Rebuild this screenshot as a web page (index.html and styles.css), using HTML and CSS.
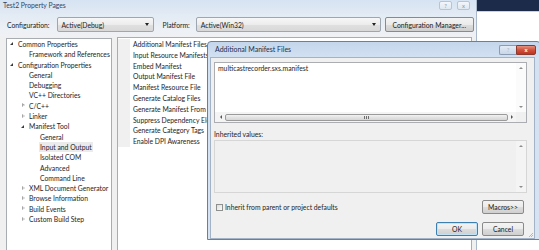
FILE: index.html
```html
<!DOCTYPE html>
<html lang="en">
<head>
    <meta charset="UTF-8">
    <meta name="viewport" content="width=device-width, initial-scale=1.0">
    <title>Test2 Property Pages</title>
    <link rel="stylesheet" href="styles.css">
</head>
<body>
    <div class="screen">
        <div class="window">
            <div class="titlebar">
                <span class="title">Test2 Property Pages</span>
                <div class="caption">
                    <span class="cap-btn">?</span>
                    <span class="cap-btn">x</span>
                </div>
            </div>

            <div class="toolbar">
                <span class="lbl">Configuration:</span>
                <div class="combo combo-config"><span>Active(Debug)</span><span class="arrow"></span></div>
                <span class="lbl lbl-platform">Platform:</span>
                <div class="combo combo-platform"><span>Active(Win32)</span><span class="arrow"></span></div>
                <button class="btn btn-manager">Configuration Manager...</button>
            </div>

            <div class="panels">
                <ul class="tree">
                    <li class="lvl0"><span class="tw open"></span>Common Properties</li>
                    <li class="lvl1"><span class="tw"></span>Framework and References</li>
                    <li class="lvl0"><span class="tw open"></span>Configuration Properties</li>
                    <li class="lvl1"><span class="tw"></span>General</li>
                    <li class="lvl1"><span class="tw"></span>Debugging</li>
                    <li class="lvl1"><span class="tw"></span>VC++ Directories</li>
                    <li class="lvl1"><span class="tw closed"></span>C/C++</li>
                    <li class="lvl1"><span class="tw closed"></span>Linker</li>
                    <li class="lvl1"><span class="tw open"></span>Manifest Tool</li>
                    <li class="lvl2"><span class="tw"></span>General</li>
                    <li class="lvl2"><span class="tw"></span><span class="selected">Input and Output</span></li>
                    <li class="lvl2"><span class="tw"></span>Isolated COM</li>
                    <li class="lvl2"><span class="tw"></span>Advanced</li>
                    <li class="lvl2"><span class="tw"></span>Command Line</li>
                    <li class="lvl1"><span class="tw closed"></span>XML Document Generator</li>
                    <li class="lvl1"><span class="tw closed"></span>Browse Information</li>
                    <li class="lvl1"><span class="tw closed"></span>Build Events</li>
                    <li class="lvl1"><span class="tw closed"></span>Custom Build Step</li>
                </ul>

                <div class="grid">
                    <div class="prop">Additional Manifest Files</div>
                    <div class="prop">Input Resource Manifests</div>
                    <div class="prop">Embed Manifest</div>
                    <div class="prop">Output Manifest File</div>
                    <div class="prop">Manifest Resource File</div>
                    <div class="prop">Generate Catalog Files</div>
                    <div class="prop">Generate Manifest From ManagedAssembly</div>
                    <div class="prop">Suppress Dependency Element</div>
                    <div class="prop">Generate Category Tags</div>
                    <div class="prop">Enable DPI Awareness</div>
                </div>
            </div>
        </div>

        <div class="behind">
            <div class="behind-bar"></div>
        </div>
    </div>

    <!-- modal editor that sits over the property pages -->
    <div class="dialog">
        <div class="dlg-titlebar">
            <span class="dlg-title">Additional Manifest Files</span>
            <div class="dlg-caption">
                <span class="dlg-help">?</span>
                <span class="dlg-close">x</span>
            </div>
        </div>
        <div class="dlg-client">
            <div class="editbox">
                <div class="edit-text">multicastrecorder.sxs.manifest</div>
                <div class="vscroll">
                    <span class="tri up"></span>
                    <span class="tri down"></span>
                </div>
                <div class="hscroll">
                    <span class="tri left"></span>
                    <div class="thumb"><span class="grip"></span></div>
                    <span class="tri right"></span>
                </div>
                <div class="corner"></div>
            </div>

            <div class="inherited-label">Inherited values:</div>
            <div class="inherited">
                <div class="inherited-text"></div>
                <div class="vscroll">
                    <span class="tri up"></span>
                    <span class="tri down"></span>
                </div>
            </div>

            <div class="options">
                <label class="check"><span class="box"></span>Inherit from parent or project defaults</label>
                <button class="btn">Macros&gt;&gt;</button>
            </div>
            <div class="actions">
                <button class="btn btn-default">OK</button>
                <button class="btn">Cancel</button>
            </div>
            <span class="grip-corner"></span>
        </div>
    </div>
</body>
</html>
```

FILE: styles.css
```css
body {
    margin: 0;
    width: 539px;
    height: 250px;
    overflow: hidden;
    position: relative;
    font-family: Lato, "Liberation Sans", sans-serif;
    font-size: 6.8px;
    color: #1e1e1e;
    background-color: #fff;
}

.screen {
    display: flex;
    height: 250px;
}

/* background property pages window */
.window {
    width: 477px;
    flex: none;
    box-sizing: border-box;
    display: flex;
    flex-direction: column;
    border-right: 1px solid #a9b8cb;
    background: linear-gradient(#d6e3f2, #e2eaf4 14px, #edf1f6 30px, #f0f0f0 40px);
}

.titlebar {
    height: 14px;
    display: flex;
    justify-content: space-between;
    align-items: flex-start;
    padding-left: 3px;
}

.title {
    line-height: 11px;
    color: #35465c;
}

.caption {
    display: flex;
    gap: 5px;
    margin-right: 6px;
    margin-top: 1px;
}

.cap-btn {
    width: 13px;
    height: 9px;
    box-sizing: border-box;
    border: 1px solid #b5c4d6;
    border-radius: 2px;
    background: linear-gradient(#f3f6fa, #dfe7f1);
    color: #8d9bad;
    font-size: 6px;
    line-height: 7px;
    text-align: center;
}

.toolbar {
    height: 21px;
    display: flex;
    align-items: center;
    padding-left: 7px;
}

.lbl {
    color: #222;
}

.combo {
    height: 15px;
    box-sizing: border-box;
    display: flex;
    align-items: center;
    justify-content: space-between;
    padding: 0 4px 0 4px;
    border: 1px solid #9ea6b0;
    border-radius: 2px;
    background: linear-gradient(#f7f7f7, #ececec 50%, #e0e0e0 51%, #d8d8d8);
}

.combo-config {
    width: 97px;
    margin-left: 7px;
}

.lbl-platform {
    margin-left: 9px;
}

.combo-platform {
    width: 185px;
    margin-left: 6px;
}

.arrow {
    width: 0;
    height: 0;
    border-left: 2.5px solid transparent;
    border-right: 2.5px solid transparent;
    border-top: 3px solid #222;
}

.btn {
    height: 14px;
    box-sizing: border-box;
    padding: 0;
    font-family: inherit;
    font-size: inherit;
    color: #222;
    border: 1px solid #8a8a8a;
    border-radius: 2px;
    background: linear-gradient(#f3f3f3, #ebebeb 50%, #dddddd 51%, #cfcfcf);
}

.btn-manager {
    width: 89px;
    height: 15px;
    margin-left: 4px;
}

.panels {
    flex: 1;
    display: flex;
    align-items: stretch;
    gap: 5px;
    padding: 2px 4px 0 6px;
}

.tree {
    list-style: none;
    margin: 1px 0 0 0;
    padding: 0;
    width: 106px;
    box-sizing: border-box;
    border: 1px solid #a8acb3;
    border-bottom: none;
    background-color: #fff;
}

.tree li {
    height: 10.3px;
    line-height: 10.3px;
    display: flex;
    align-items: center;
    white-space: nowrap;
}

.lvl0 { padding-left: 2px; }
.lvl1 { padding-left: 13px; }
.lvl2 { padding-left: 24px; }

.tw {
    width: 9px;
    height: 10px;
    flex: none;
    position: relative;
}

.tw.open::before {
    content: "";
    position: absolute;
    left: 1px;
    top: 3px;
    border-left: 3.5px solid transparent;
    border-bottom: 3.5px solid #3a3a3a;
}

.tw.closed::before {
    content: "";
    position: absolute;
    left: 2px;
    top: 2.5px;
    border-top: 2.5px solid transparent;
    border-bottom: 2.5px solid transparent;
    border-left: 3px solid #a6a6a6;
}

.tw.closed::after {
    content: "";
    position: absolute;
    left: 2.6px;
    top: 3.6px;
    border-top: 1.4px solid transparent;
    border-bottom: 1.4px solid transparent;
    border-left: 1.7px solid #fff;
}

.selected {
    background-color: #ebebeb;
    padding: 0 1px;
    margin-left: -1px;
}

.grid {
    flex: 1;
    box-sizing: border-box;
    border: 1px solid #a8acb3;
    border-bottom: none;
    background-color: #fff;
    padding-top: 1px;
}

.prop {
    height: 10.8px;
    line-height: 10.8px;
    padding-left: 15px;
    white-space: nowrap;
    overflow: hidden;
    background: linear-gradient(to right, #f0f0f0 12px, #fff 12px);
}

/* window behind the property pages */
.behind {
    flex: 1;
    background-color: #fff;
}

.behind-bar {
    height: 11px;
    background-color: #1d2b4b;
    border-bottom: 1px solid #c9d3e0;
}

/* Additional Manifest Files dialog */
.dialog {
    position: absolute;
    left: 207px;
    top: 41px;
    width: 334px;
    height: 199px;
    box-sizing: border-box;
    display: flex;
    flex-direction: column;
    border: 1px solid #6c7f99;
    border-radius: 4px 4px 0 0;
    padding: 0 5px 2px 2px;
    background: linear-gradient(#c4d6ec, #d3e1f1 16px, #d7e3f1);
}

.dlg-titlebar {
    height: 15px;
    flex: none;
    display: flex;
    justify-content: space-between;
    align-items: flex-start;
}

.dlg-title {
    padding-left: 5px;
    line-height: 15px;
    font-size: 7px;
    color: #1b2f4b;
}

.dlg-caption {
    display: flex;
    margin-top: 3px;
    margin-right: -1px;
}

.dlg-help,
.dlg-close {
    height: 10px;
    box-sizing: border-box;
    border: 1px solid #8b9bb3;
    text-align: center;
    font-size: 6px;
    line-height: 8px;
}

.dlg-help {
    width: 17px;
    border-radius: 2px 0 0 2px;
    border-right: none;
    color: #a7b4c6;
    background: linear-gradient(#e3ebf5, #c9d7e8);
}

.dlg-close {
    width: 20px;
    border-radius: 0 2px 2px 0;
    border-color: #8d3a2e;
    color: #fff;
    font-weight: bold;
    background: linear-gradient(#e7917f, #d0513d 50%, #c1341f);
}

.dlg-client {
    flex: 1;
    position: relative;
    display: flex;
    flex-direction: column;
    padding: 4px 7px 2px 3px;
    border: 1px solid #a3b3c7;
    background-color: #f0f0f0;
}

.editbox {
    height: 61px;
    box-sizing: border-box;
    display: grid;
    grid-template-columns: 1fr 10px;
    grid-template-rows: 1fr 10px;
    border: 1px solid #abadb3;
    background-color: #fff;
}

.edit-text {
    padding: 1px 3px;
    line-height: 8px;
    white-space: nowrap;
}

.vscroll {
    display: flex;
    flex-direction: column;
    justify-content: space-between;
    align-items: center;
    padding: 4px 0;
    background-color: #fbfbfb;
}

.hscroll {
    display: flex;
    align-items: center;
    padding: 0 3px 0 5px;
    gap: 3px;
    background-color: #f4f4f4;
}

.corner {
    background-color: #f0f0f0;
}

.thumb {
    flex: 1;
    height: 7px;
    box-sizing: border-box;
    display: flex;
    justify-content: center;
    align-items: center;
    border: 1px solid #9a9a9a;
    border-radius: 2px;
    background: linear-gradient(#f2f2f2, #e2e2e2 50%, #d6d6d6);
}

.grip {
    width: 5px;
    height: 3px;
    background: repeating-linear-gradient(to right, #6f6f6f 0 1px, transparent 1px 2px);
}

.tri {
    width: 0;
    height: 0;
}

.tri.up {
    border-left: 2px solid transparent;
    border-right: 2px solid transparent;
    border-bottom: 2px solid #8c8c8c;
}

.tri.down {
    border-left: 2px solid transparent;
    border-right: 2px solid transparent;
    border-top: 2px solid #8c8c8c;
}

.tri.left {
    border-top: 2px solid transparent;
    border-bottom: 2px solid transparent;
    border-right: 2px solid #555;
}

.tri.right {
    border-top: 2px solid transparent;
    border-bottom: 2px solid transparent;
    border-left: 2px solid #555;
}

.inherited-label {
    margin-top: 6px;
    line-height: 10px;
    height: 11px;
}

.inherited {
    height: 53px;
    box-sizing: border-box;
    display: grid;
    grid-template-columns: 1fr 10px;
    border: 1px solid #d6d6d6;
    background-color: #f0f0f0;
}

.inherited .vscroll {
    background-color: #f4f4f4;
}

.options {
    margin-top: 7px;
    display: flex;
    align-items: center;
    justify-content: space-between;
    padding-right: 3px;
}

.check {
    display: flex;
    align-items: center;
    gap: 2px;
    margin-left: 2px;
}

.box {
    width: 7px;
    height: 7px;
    box-sizing: border-box;
    border: 1px solid #8e8f8f;
    background: linear-gradient(135deg, #dcdcdc, #fbfbfb);
}

.options .btn,
.actions .btn {
    width: 42px;
}

.actions {
    margin-top: 8px;
    display: flex;
    justify-content: flex-end;
    gap: 4px;
    padding-right: 3px;
}

.btn-default {
    border-color: #3c7fb1;
    box-shadow: inset 0 0 0 1px #bfe3f9;
}

.grip-corner {
    position: absolute;
    right: 1px;
    bottom: 1px;
    width: 5px;
    height: 5px;
    background: linear-gradient(135deg, transparent 55%, #b7b7b7 55% 65%, transparent 65% 78%, #b7b7b7 78% 88%, transparent 88%);
}
```
